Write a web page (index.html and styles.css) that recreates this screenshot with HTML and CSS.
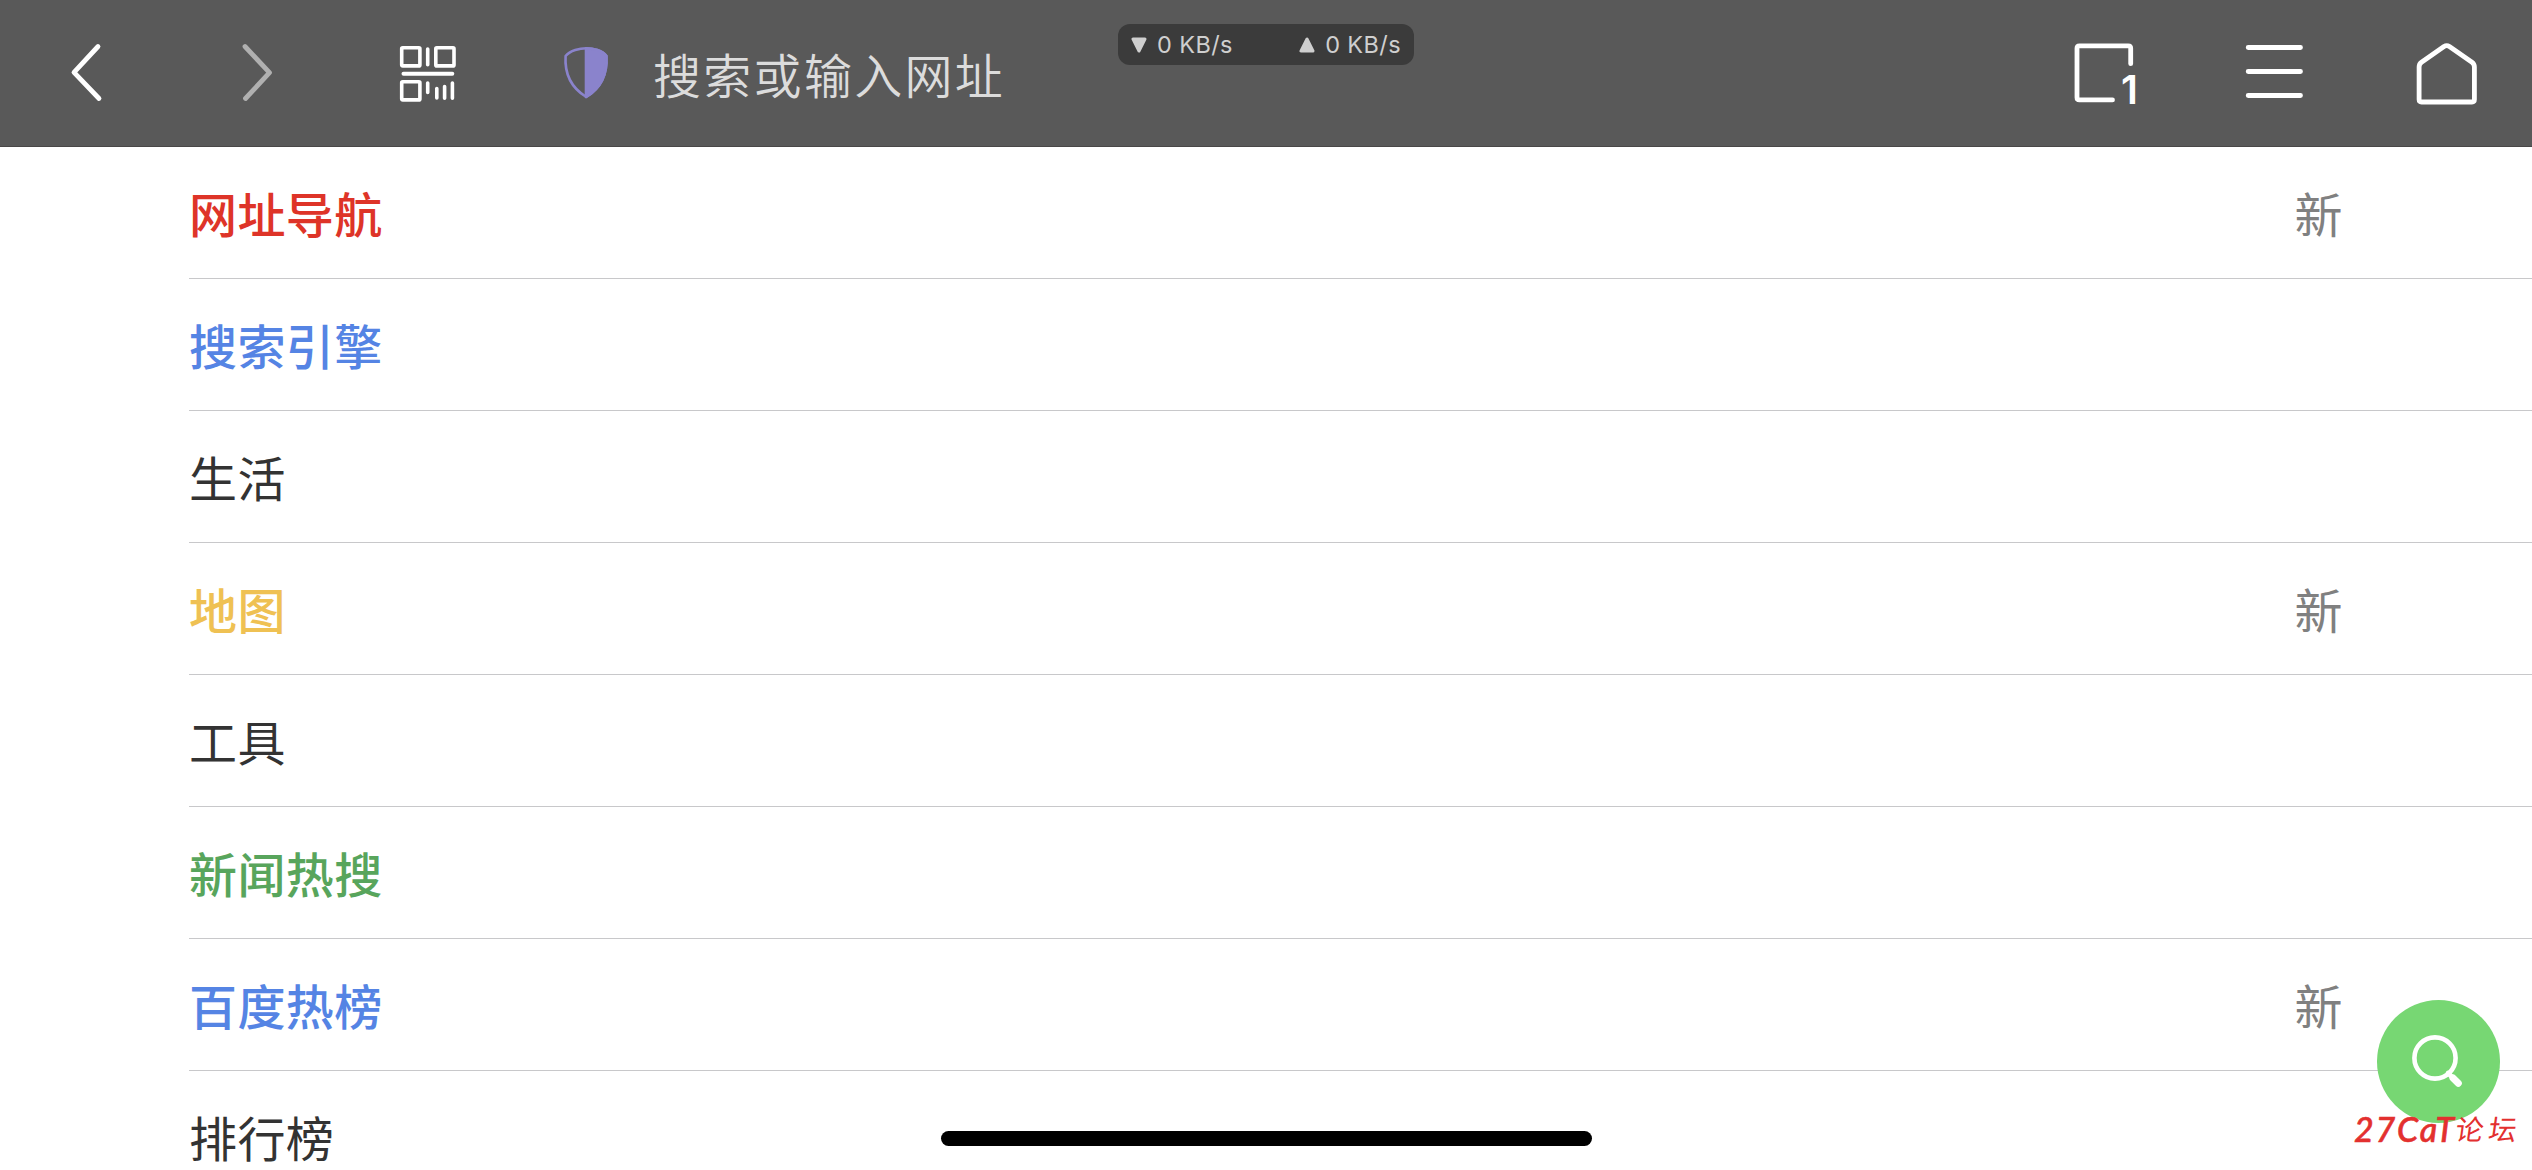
FILE: index.html
```html
<!DOCTYPE html>
<html lang="zh-CN">
  <head>
    <meta charset="UTF-8" />
    <meta name="viewport" content="width=device-width, initial-scale=1.0" />
    <title>网址导航</title>
    <link rel="stylesheet" href="styles.css">
  </head>
  <body>
    <header class="toolbar">
      <svg class="icon back" viewBox="0 0 64 64">
        <path d="M42 5.5 L18 31.3 L43 57.5" />
      </svg>
      <svg class="icon forward" viewBox="0 0 64 64">
        <path d="M21 5.5 L45.5 31.7 L21.5 57.5" />
      </svg>
      <svg class="icon qrcode" viewBox="0 0 64 64">
        <rect x="5.7" y="6.7" width="18.2" height="18.2" rx="1" />
        <rect x="39.8" y="6.7" width="18.2" height="18.2" rx="1" />
        <rect x="5.7" y="40.7" width="18.2" height="18.2" rx="1" />
        <path class="line" d="M7.5 32.8 H56.3" />
        <path d="M31.7 8 V23.7 M31.7 42 V51.5 M40.8 47.5 V57 M48.6 45.5 V57.2 M56.4 42 V57.2" />
      </svg>
      <svg class="icon shield" viewBox="0 0 64 64">
        <path d="M30.3 7.2 C24 7.2 14 9.5 9.6 15 C8.5 32 14 46 30.3 56 C46.5 46 51.5 32 50.4 15 C46.5 9.5 37 7.2 30.3 7.2 Z" />
        <path class="half" d="M30 7.2 C37 7.2 46.5 9.5 50.4 15 C51.5 32 46.5 46 30 56 Z" />
      </svg>
      <div class="address">搜索或输入网址</div>
      <div class="icon tabs">
        <svg viewBox="0 0 64 64">
          <path d="M58.7 22.7 V7.2 Q58.7 4.8 56.3 4.8 H7.4 Q5 4.8 5 7.2 V56.5 Q5 58.9 7.4 58.9 H40.5" />
        </svg>
        <span class="count">1</span>
      </div>
      <svg class="icon menu" viewBox="0 0 64 64">
        <path d="M6.2 6.5 H58.5 M6.2 30.5 H58.5 M6.2 54.5 H58.5" />
      </svg>
      <svg class="icon home" viewBox="0 0 64 64">
        <path d="M29 5.5 Q31.7 3.8 34.4 5.5 L57 21.3 Q59.4 23 59.4 26 V58.6 Q59.4 61 57 61 H6.5 Q4.1 61 4.1 58.6 V26 Q4.1 23 6.5 21.3 Z" />
      </svg>
    </header>

    <ul class="list">
      <li class="row"><span class="name red">网址导航</span><span class="new">新</span></li>
      <li class="row"><span class="name blue">搜索引擎</span></li>
      <li class="row"><span class="name">生活</span></li>
      <li class="row"><span class="name yellow">地图</span><span class="new">新</span></li>
      <li class="row"><span class="name">工具</span></li>
      <li class="row"><span class="name green">新闻热搜</span></li>
      <li class="row"><span class="name blue">百度热榜</span><span class="new">新</span></li>
      <li class="row"><span class="name">排行榜</span></li>
    </ul>

    <div class="speed">
      <span class="rate">
        <svg class="arrow" viewBox="0 0 16 16"><path d="M2 2 H14 L8 14 Z" /></svg>0 KB/s
      </span>
      <span class="rate">
        <svg class="arrow" viewBox="0 0 16 16"><path d="M2 14 H14 L8 2 Z" /></svg>0 KB/s
      </span>
    </div>

    <div class="search-button">
      <svg viewBox="0 0 123 123">
        <circle cx="58" cy="58" r="20.6" />
        <path class="neck" d="M71 73 L77 79" />
        <path class="handle" d="M76 78 L81.3 83.3" />
      </svg>
    </div>
    <div class="watermark"><span class="latin">27CaT</span><span class="han">论坛</span></div>
    <div class="home-bar"></div>
  </body>
</html>
```
FILE: styles.css
```css
* {
  margin: 0;
  padding: 0;
  box-sizing: border-box;
}
body {
  position: relative;
  height: 1170px;
  overflow: hidden;
  background-color: #ffffff;
  color: #333333;
  font-family: "Noto Sans CJK SC", sans-serif;
}

/* toolbar */
.toolbar {
  display: flex;
  align-items: center;
  height: 147px;
  padding: 0 53px 0 56px;
  background-color: #595959;
  border-bottom: 1px solid #494747;
}
.icon {
  flex: none;
  width: 64px;
  height: 64px;
  fill: none;
  stroke: #ffffff;
  stroke-width: 4.8;
  stroke-linecap: round;
  stroke-linejoin: round;
}
.forward {
  margin-left: 104px;
  stroke: #b0b0b0;
}
.qrcode {
  margin-left: 108px;
  stroke-width: 3.6;
}
.qrcode .line {
  stroke-width: 4;
}
.shield {
  margin-left: 96px;
  stroke: #8a83cc;
  stroke-width: 2.6;
}
.shield .half {
  fill: #8a83cc;
}
.address {
  flex: 1;
  margin-left: 33px;
  color: #dcdcdc;
  font-size: 48px;
  line-height: 64px;
  letter-spacing: 2.3px;
  font-weight: 350;
}
.tabs {
  position: relative;
}
.tabs svg {
  display: block;
}
.count {
  position: absolute;
  right: -2px;
  bottom: -7px;
  color: #ffffff;
  font-family: Inter, sans-serif;
  font-size: 40px;
  line-height: 44px;
  font-weight: 600;
}
.menu {
  margin-left: 106px;
}
.home {
  margin-left: 109px;
}

/* list */
.list {
  list-style: none;
  padding-left: 189px;
}
.row {
  display: flex;
  align-items: center;
  justify-content: space-between;
  height: 132px;
  padding-right: 189px;
  padding-bottom: 2px;
  border-bottom: 1px solid #c8c8ca;
  font-size: 48px;
  line-height: 64px;
  letter-spacing: 0.4px;
}
.red, .blue, .yellow, .green {
  font-weight: 500;
}
.red {
  color: #de3428;
}
.blue {
  color: #5584e4;
}
.yellow {
  color: #efc153;
}
.green {
  color: #58a55c;
}
.new {
  color: #808080;
}

/* network speed */
.speed {
  position: absolute;
  left: 1118px;
  top: 24px;
  width: 296px;
  height: 41px;
  padding: 0 13px;
  display: flex;
  align-items: center;
  justify-content: space-between;
  border-radius: 12px;
  background-color: #3b3b3b;
  color: #cfcfcf;
  font-family: Inter, sans-serif;
  font-size: 23.5px;
  letter-spacing: 0.4px;
}
.rate {
  display: flex;
  align-items: center;
  gap: 10px;
}
.arrow {
  width: 16px;
  height: 16px;
  fill: #cfcfcf;
  stroke: #cfcfcf;
  stroke-width: 3;
  stroke-linejoin: round;
}

/* floating things */
.search-button {
  position: absolute;
  left: 2377px;
  top: 1000px;
  width: 123px;
  height: 123px;
  border-radius: 50%;
  background-color: #77d773;
}
.search-button svg {
  display: block;
  fill: none;
  stroke: #ffffff;
  stroke-width: 4.6;
  stroke-linecap: round;
}
.search-button .handle {
  stroke-width: 7;
}
.watermark {
  position: absolute;
  left: 2354px;
  top: 1107px;
  display: flex;
  align-items: center;
  height: 42px;
  color: #e3302f;
  white-space: nowrap;
}
.latin {
  font-family: Lato, sans-serif;
  font-style: italic;
  font-size: 34px;
  font-weight: 500;
  letter-spacing: 1.8px;
  -webkit-text-stroke: 0.6px #e3302f;
}
.han {
  font-size: 28px;
  letter-spacing: 5px;
  transform: skewX(-8deg);
}
.home-bar {
  position: absolute;
  left: 941px;
  top: 1131px;
  width: 651px;
  height: 15px;
  border-radius: 8px;
  background-color: #000000;
}
```
